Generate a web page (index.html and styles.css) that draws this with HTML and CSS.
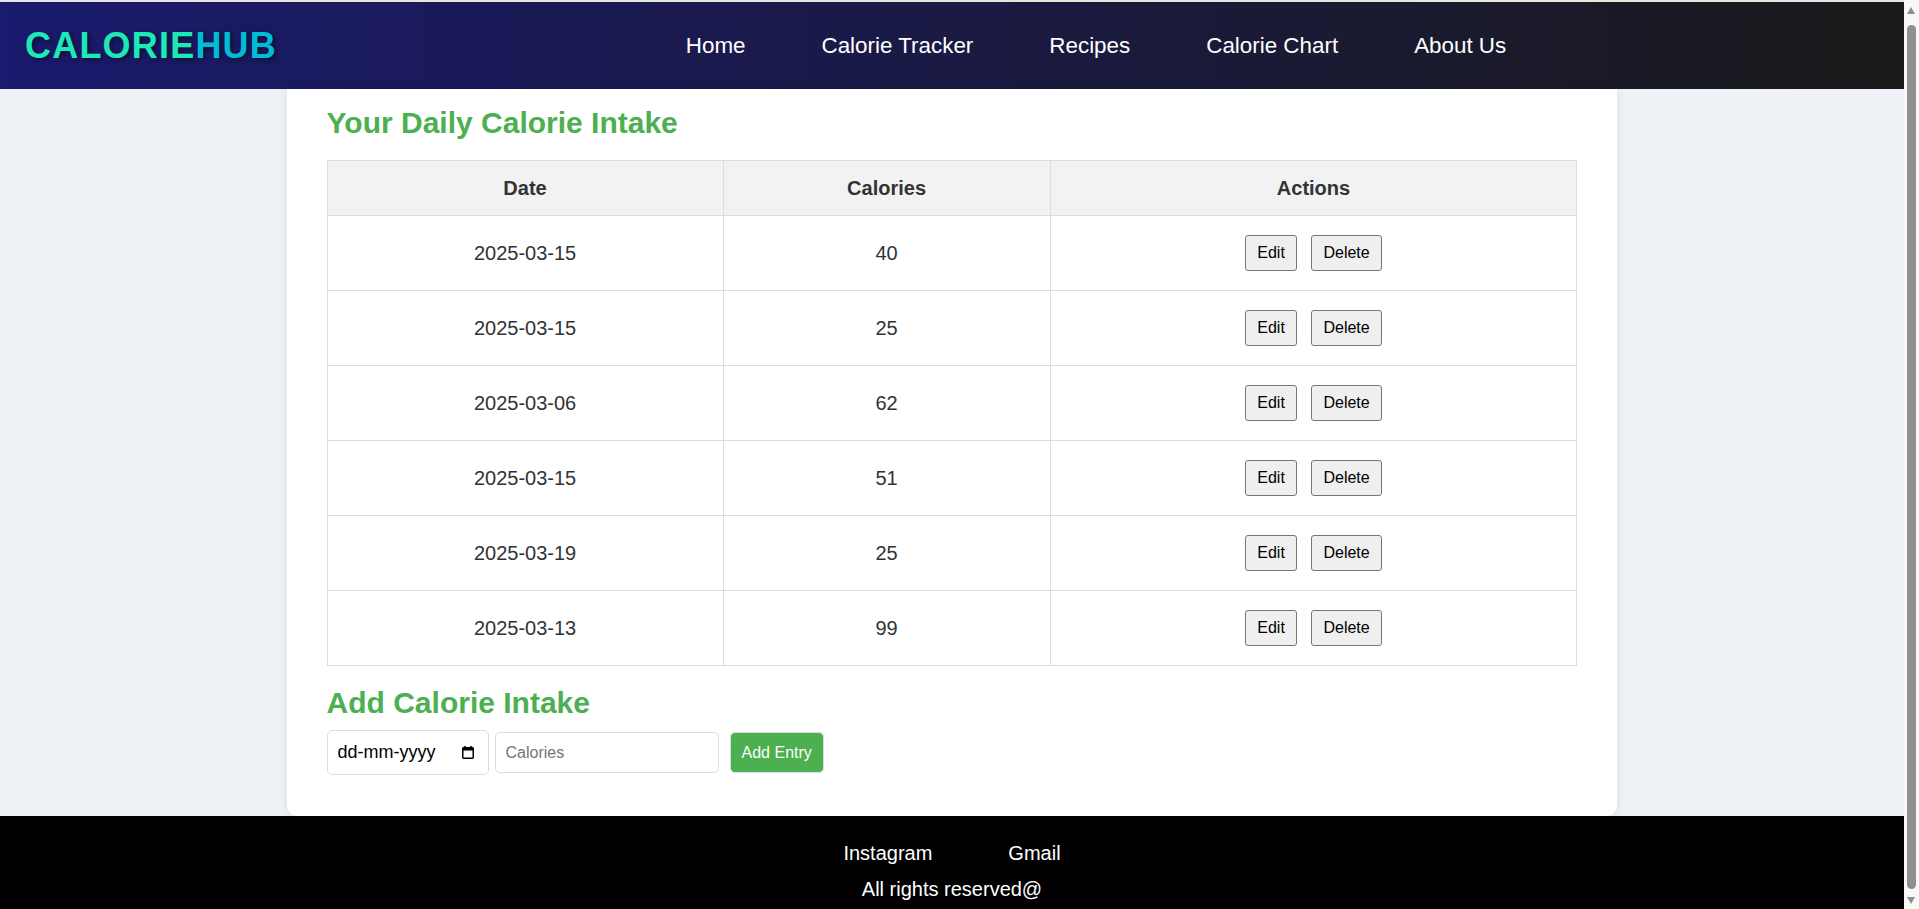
FILE: index.html
```html
<!DOCTYPE html>
<html lang="en">
<head>
<meta charset="utf-8">
<title>CalorieHub - Calorie Tracker</title>
<link rel="stylesheet" href="styles.css">
</head>
<body>
<header class="site-header">
  <div class="logo"><span class="logo-a">CALORIE</span><span class="logo-b">HUB</span></div>
  <nav class="nav">
    <ul class="nav-list">
      <li><a class="nav-link" href="#">Home</a></li>
      <li><a class="nav-link" href="#">Calorie Tracker</a></li>
      <li><a class="nav-link" href="#">Recipes</a></li>
      <li><a class="nav-link" href="#">Calorie Chart</a></li>
      <li><a class="nav-link" href="#">About Us</a></li>
    </ul>
  </nav>
</header>
<main class="page">
  <section class="card">
    <h2 class="section-title section-title--first">Your Daily Calorie Intake</h2>
    <table class="intake-table">
      <colgroup><col class="col-date"><col class="col-cal"><col class="col-actions"></colgroup>
      <thead>
        <tr><th>Date</th><th>Calories</th><th>Actions</th></tr>
      </thead>
      <tbody>
        <tr><td>2025-03-15</td><td>40</td><td><button class="btn" type="button">Edit</button> <button class="btn" type="button">Delete</button></td></tr>
        <tr><td>2025-03-15</td><td>25</td><td><button class="btn" type="button">Edit</button> <button class="btn" type="button">Delete</button></td></tr>
        <tr><td>2025-03-06</td><td>62</td><td><button class="btn" type="button">Edit</button> <button class="btn" type="button">Delete</button></td></tr>
        <tr><td>2025-03-15</td><td>51</td><td><button class="btn" type="button">Edit</button> <button class="btn" type="button">Delete</button></td></tr>
        <tr><td>2025-03-19</td><td>25</td><td><button class="btn" type="button">Edit</button> <button class="btn" type="button">Delete</button></td></tr>
        <tr><td>2025-03-13</td><td>99</td><td><button class="btn" type="button">Edit</button> <button class="btn" type="button">Delete</button></td></tr>
      </tbody>
    </table>
    <h2 class="section-title">Add Calorie Intake</h2>
    <form class="entry-form">
      <span class="date-field">
        <input class="field field--date" type="text" placeholder="dd-mm-yyyy">
        <svg class="date-icon" viewBox="0 0 12 13" width="12" height="13" aria-hidden="true">
          <rect x="2.2" y="0" width="1.6" height="2.5" fill="#000"/>
          <rect x="8.2" y="0" width="1.6" height="2.5" fill="#000"/>
          <rect x="0.75" y="1.75" width="10.5" height="10.5" rx="1" fill="none" stroke="#000" stroke-width="1.5"/>
          <rect x="0.5" y="1.5" width="11" height="3" fill="#000"/>
        </svg>
      </span>
      <input class="field field--cal" type="number" placeholder="Calories">
      <button class="add-btn" type="submit">Add Entry</button>
    </form>
  </section>
</main>
<footer class="site-footer">
  <div class="footer-links">
    <a class="footer-link" href="#">Instagram</a>
    <a class="footer-link" href="#">Gmail</a>
  </div>
  <p class="footer-copy">All rights reserved@</p>
</footer>
<div class="scrollbar" aria-hidden="true">
  <span class="scrollbar-up"></span>
  <span class="scrollbar-thumb"></span>
  <span class="scrollbar-down"></span>
</div>
</body>
</html>
```
FILE: styles.css
```css
html, body {
  margin: 0;
  padding: 0;
}

body {
  font-family: "Liberation Sans", Arial, sans-serif;
  font-size: 20px;
  background: #eef2f7;
  color: #333;
  padding-right: 15px;
}

/* Header */
.site-header {
  display: flex;
  align-items: center;
  height: 87px;
  border-top: 2px solid #e8e5de;
  padding: 0 29px 0 25px;
  background: linear-gradient(to right, #1a1a6e, #1a1a1a);
}

.logo {
  font-size: 36px;
  font-weight: bold;
  letter-spacing: 1.2px;
  text-shadow: 2px 2px 5px rgba(0, 0, 0, 0.5);
}

.logo-a { color: #1de9b6; }
.logo-b { color: #00bcd4; }

.nav { flex: 1; }

.nav-list {
  list-style: none;
  margin: 0;
  padding: 0 0 0 40px;
  display: flex;
  justify-content: center;
  gap: 76px;
}

.nav-link {
  color: #fff;
  text-decoration: none;
  font-size: 22.4px;
}

/* Card */
.card {
  width: 69.9%;
  margin: 0 auto;
  box-sizing: border-box;
  background: #fff;
  padding: 17px 40px 41px;
  border-radius: 0 0 10px 10px;
  box-shadow: 0 0 10px rgba(0, 0, 0, 0.1);
}

.section-title {
  font-size: 30px;
  color: #4caf50;
  margin: 20px 0 10px;
}

.section-title--first { margin-top: 0; }

/* Table */
.intake-table {
  width: 100%;
  border-collapse: collapse;
  table-layout: fixed;
  margin: 20px 0;
}

.col-date { width: 396px; }
.col-cal { width: 327px; }

.intake-table th,
.intake-table td {
  border: 1px solid #ddd;
  text-align: center;
  padding: 0 15px;
  color: #333;
}

.intake-table th {
  background: #f2f2f2;
  height: 54px;
  font-weight: bold;
}

.intake-table td { height: 74px; }

.btn {
  font: 16px "Liberation Sans", Arial, sans-serif;
  padding: 8px 11px;
  margin: 0 4.5px;
  background: #efefef;
  color: #000;
  border: 1px solid #767676;
  border-radius: 3px;
  vertical-align: middle;
}

/* Form */
.entry-form {
  display: flex;
  align-items: center;
}

.date-field {
  position: relative;
  display: inline-block;
  margin-right: 6px;
}

.field {
  font: 16px "Liberation Sans", Arial, sans-serif;
  padding: 0 10px;
  border: 1px solid #ddd;
  border-radius: 5px;
  box-sizing: border-box;
  color: #000;
  background: #fff;
  display: block;
}

.field--date { width: 162px; height: 45px; font-size: 18px; }
.field--date::placeholder { color: #000; }

.field--cal { width: 224px; height: 41px; margin-right: 11px; }
.field--cal::placeholder { color: #757575; }

.date-icon {
  position: absolute;
  right: 15px;
  top: 16px;
}

.add-btn {
  font: 16px "Liberation Sans", Arial, sans-serif;
  height: 41px;
  padding: 0 11px;
  background: #4caf50;
  color: #fff;
  border: 1px solid #ddd;
  border-radius: 5px;
}

/* Footer */
.site-footer {
  background: #000;
  color: #fff;
  padding: 26px 0;
  text-align: center;
}

.footer-links {
  display: flex;
  justify-content: center;
  gap: 76px;
  line-height: 23px;
}

.footer-link {
  color: #fff;
  text-decoration: none;
}

.footer-copy {
  margin: 13px 0 0;
  line-height: 23px;
}

/* Browser-style scrollbar overlay */
.scrollbar {
  position: fixed;
  top: 0;
  right: 0;
  width: 15px;
  height: 100%;
  background: #f8f8f8;
}

.scrollbar-thumb {
  position: absolute;
  top: 25px;
  bottom: 20px;
  left: 3px;
  width: 9px;
  border-radius: 5px;
  background: #8f8f8f;
}

.scrollbar-up,
.scrollbar-down {
  position: absolute;
  left: 3px;
  width: 0;
  height: 0;
  border-left: 4.5px solid transparent;
  border-right: 4.5px solid transparent;
}

.scrollbar-up {
  top: 7px;
  border-bottom: 7px solid #8f8f8f;
}

.scrollbar-down {
  bottom: 5px;
  border-top: 7px solid #8f8f8f;
}
```
